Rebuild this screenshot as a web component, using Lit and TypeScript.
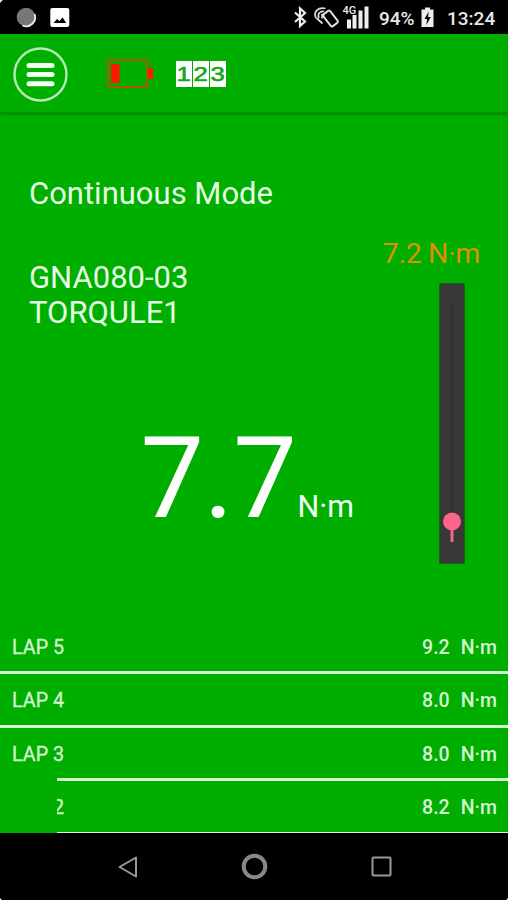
import { LitElement, html, css } from "lit";
import { customElement } from "lit/decorators.js";

const LAPS = [
  { n: 5, v: "9.2" },
  { n: 4, v: "8.0" },
  { n: 3, v: "8.0" },
  { n: 2, v: "8.2" },
];

@customElement("status-bar")
class StatusBar extends LitElement {
  static styles = css`
    :host { display: flex; height: 34px; background: #000; color: #e8e8e8; justify-content: space-between; font: 500 19px/37px Roboto, sans-serif; }
    .side { display: flex; }
    .pct { width: 39px; margin-left: 9px; white-space: nowrap; }
    .clock { width: 50px; margin: 0 11px 0 12px; white-space: nowrap; }
    svg { display: block; flex: none; }
    .net { font: 500 11px Roboto, sans-serif; }
  `;
  render() {
    return html`
      <div class="side">
        <svg width="80" height="34" viewBox="0 0 80 34">
          <circle cx="26" cy="17" r="9.300" fill="#777" />
          <path d="M34.500 14a9 9 0 0 1-12 11.500" fill="none" stroke="#eee" stroke-width="1.800" />
          <rect x="50.300" y="8" width="19" height="19" rx="2" fill="#fff" />
          <path d="M53.500 23l3.500-4 2.500 2 3-3.500 3.800 5.500z" fill="#000" />
          <path d="M0 0h3l-3 3z" fill="#ddd" />
        </svg>
      </div>
      <div class="side">
        <svg width="80" height="34" viewBox="290 0 80 34">
          <path d="M295 12.500l10 9-5 4.500V8.500l5 4.500-10 9" fill="none" stroke="#eee" stroke-width="2.200" />
          <g fill="none" stroke="#ddd">
            <rect x="-4.300" y="-7.500" width="8.600" height="15" rx="1.500" transform="translate(330.500 18.500) rotate(-38)" stroke-width="2" />
            <path d="M316 18c-3-6 2-11 9.500-9.500M319 18c-2-4 1-7 5-6.500M322.500 23.500l-6-5.500M322 18.500v-4h3" stroke-width="1.700" />
          </g>
          <g fill="#eee">
            <rect x="347" y="19.500" width="4" height="9" /><rect x="352.500" y="15" width="4" height="13.500" /><rect x="358.500" y="10.500" width="4" height="18" /><rect x="364.500" y="6.500" width="4" height="22" />
            <text class="net" x="342.500" y="14" stroke="#000" stroke-width="1.500" paint-order="stroke">4G</text>
          </g>
        </svg>
        <span class="pct">94%</span>
        <svg width="17" height="34" viewBox="419 0 17 34">
          <path d="M422.500 9.500h3.500V7.500h5v2h3.500V27h-12z" fill="#eee" />
          <path d="M429.700 11.500l-4.200 7.500h2.600l-.8 6 4.500-8h-2.800z" fill="#000" />
        </svg>
        <span class="clock">13:24</span>
      </div>`;
  }
}

@customElement("tool-bar")
class ToolBar extends LitElement {
  static styles = css`
    :host { display: flex; align-items: center; height: 79px; box-sizing: border-box; border-bottom: 1px solid #029402; box-shadow: 0 1px 3px rgba(0, 70, 0, 0.5); padding: 2px 0 0 13px; }
    .batt { margin-left: 39px; }
    svg { display: block; flex: none; }
    .digits { display: flex; gap: 1px; margin-left: 22px; }
    .digit { width: 16px; height: 26px; background: #fff; color: #14a814; font: 400 20px/26px "Liberation Sans", sans-serif; -webkit-text-stroke: 0.600px #14a814; display: flex; justify-content: center; }
    .digit span { transform: scaleX(1.280); }
  `;
  render() {
    return html`
      <svg width="55" height="55" viewBox="0 0 55 55">
        <circle cx="27.500" cy="27.500" r="26" fill="none" stroke="#b5ebb5" stroke-width="2.400" />
        <path d="M16 18.500h23M16 27.600h23M16 36.800h23" stroke="#f4fff4" stroke-width="5" stroke-linecap="round" />
      </svg>
      <svg class="batt" width="47" height="30" viewBox="0 0 47 30">
        <rect x="1" y="1" width="39.500" height="27" fill="none" stroke="#c9480a" stroke-width="1.800" />
        <path d="M4 5h8.500v19h-8.500zM41 9h4.200q1 0 1 1v9q0 1-1 1h-4.200z" fill="#ff1800" />
      </svg>
      <div class="digits">${["1", "2", "3"].map((d) => html`<div class="digit"><span>${d}</span></div>`)}</div>`;
  }
}

@customElement("lap-list")
class LapList extends LitElement {
  static styles = css`
    :host { display: block; position: relative; height: 212px; overflow: hidden; font: 500 19.500px/54px Roboto, sans-serif; color: #d5f5d5; }
    .row { display: flex; height: 53.400px; box-sizing: border-box; border-bottom: 3px solid #d4f6d4; padding: 0 11px 0 12px; white-space: pre; }
    .name { flex: 1; font-size: 19.700px; font-weight: 400; -webkit-text-stroke: 0.300px; }
    .unit { margin-left: 11px; }
    .cover { position: absolute; left: 0; top: 152px; width: 57px; height: 60px; background: #00ae00; }
  `;
  render() {
    return html`${LAPS.map(
      (l) => html`<div class="row"><span class="name">LAP ${l.n}</span><span>${l.v}</span><span class="unit">N·m</span></div>`
    )}<div class="cover"></div>`;
  }
}

@customElement("nav-bar")
class NavBar extends LitElement {
  static styles = css`
    :host { display: flex; height: 67px; background: #000; }
    svg { display: block; }
  `;
  render() {
    return html`<svg width="508" height="67" viewBox="0 833 508 67" fill="none" stroke="#999" stroke-width="2">
      <path d="M136 857.500v19L119.500 867z" stroke-linejoin="round" />
      <circle cx="254.500" cy="866.500" r="10.800" stroke-width="4" stroke="#888" />
      <rect x="372.500" y="857.500" width="18" height="18" rx="1" />
      <path d="M0 898q1 1 2 2H0zM508 898q-1 1-2 2h2z" fill="#ddd" stroke="none" />
    </svg>`;
  }
}

@customElement("app-root")
class AppRoot extends LitElement {
  static styles = css`
    :host { display: flex; flex-direction: column; width: 508px; height: 900px; overflow: hidden; background: #00ae00; color: #e4fbe4; font-family: Roboto, sans-serif; }
    .main { flex: 1; display: flex; justify-content: space-between; min-height: 0; }
    .left { display: flex; flex-direction: column; padding-left: 29px; font-size: 31px; line-height: 35px; white-space: nowrap; }
    .mode { margin-top: 63px; }
    .device { margin-top: 49px; }
    .reading { display: flex; align-items: baseline; margin: 79px 0 0 111.500px; color: #fff; line-height: 140px; }
    .value { font-size: 113px; letter-spacing: -0.300px; }
    .unit { font-size: 30.500px; margin-left: 1px; color: #f0fff0; }
    .right { display: flex; flex-direction: column; align-items: flex-end; padding: 123px 28px 0 0; }
    .target { font-size: 28.500px; letter-spacing: -0.300px; line-height: 35px; color: #dd9000; white-space: nowrap; }
    .gauge { display: block; margin: 12px 15px 0 0; }
  `;
  render() {
    return html`
      <status-bar></status-bar>
      <tool-bar></tool-bar>
      <div class="main">
        <div class="left">
          <div class="mode">Continuous Mode</div>
          <div class="device">GNA080-03<br />TORQULE1</div>
          <div class="reading"><span class="value">7.7</span><span class="unit">N·m</span></div>
        </div>
        <div class="right">
          <div class="target">7.2 N·m</div>
          <svg class="gauge" width="26" height="281" viewBox="0 0 26 281">
            <rect x=".8" y=".8" width="24.400" height="279.400" fill="#383838" stroke="#284528" />
            <path d="M13 22v220" stroke="#2f322f" stroke-width="2.500" />
            <path d="M13 240v19" stroke="#f56489" stroke-width="3" />
            <circle cx="13" cy="238.500" r="9" fill="#ff6489" />
          </svg>
        </div>
      </div>
      <lap-list></lap-list>
      <nav-bar></nav-bar>`;
  }
}
